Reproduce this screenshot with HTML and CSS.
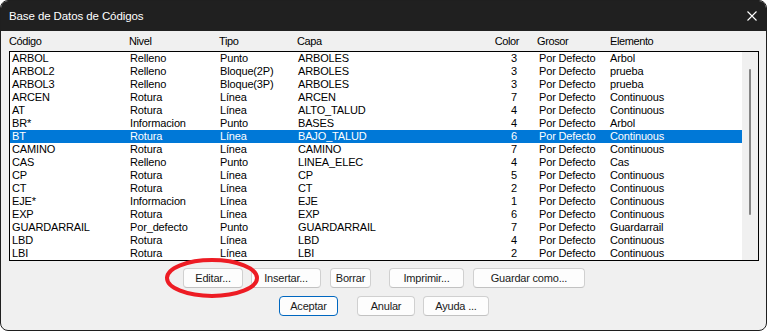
FILE: index.html
```html
<!DOCTYPE html>
<html lang="es">
<head>
<meta charset="utf-8">
<title>Base de Datos de Códigos</title>
<link rel="stylesheet" href="styles.css">
</head>
<body>
<div class="window">
  <div class="titlebar">
    <span class="title">Base de Datos de Códigos</span>
    <svg class="close" width="10" height="10" viewBox="0 0 10 10"><path d="M0.5 0.5 L9.5 9.5 M9.5 0.5 L0.5 9.5" stroke="#fff" stroke-width="1.1" fill="none"/></svg>
  </div>
  <div class="body">
    <div class="head">
      <span>Código</span><span>Nivel</span><span>Tipo</span><span>Capa</span><span class="r">Color</span><span>Grosor</span><span>Elemento</span>
    </div>
    <div class="listbox">
      <div class="rows">
        <div class="row"><span>ARBOL</span><span>Relleno</span><span>Punto</span><span>ARBOLES</span><span class="r">3</span><span>Por Defecto</span><span>Arbol</span></div>
        <div class="row"><span>ARBOL2</span><span>Relleno</span><span>Bloque(2P)</span><span>ARBOLES</span><span class="r">3</span><span>Por Defecto</span><span>prueba</span></div>
        <div class="row"><span>ARBOL3</span><span>Relleno</span><span>Bloque(3P)</span><span>ARBOLES</span><span class="r">3</span><span>Por Defecto</span><span>prueba</span></div>
        <div class="row"><span>ARCEN</span><span>Rotura</span><span>Línea</span><span>ARCEN</span><span class="r">7</span><span>Por Defecto</span><span>Continuous</span></div>
        <div class="row"><span>AT</span><span>Rotura</span><span>Línea</span><span>ALTO_TALUD</span><span class="r">4</span><span>Por Defecto</span><span>Continuous</span></div>
        <div class="row"><span>BR*</span><span>Informacion</span><span>Punto</span><span>BASES</span><span class="r">4</span><span>Por Defecto</span><span>Arbol</span></div>
        <div class="row sel"><span>BT</span><span>Rotura</span><span>Línea</span><span>BAJO_TALUD</span><span class="r">6</span><span>Por Defecto</span><span>Continuous</span></div>
        <div class="row"><span>CAMINO</span><span>Rotura</span><span>Línea</span><span>CAMINO</span><span class="r">7</span><span>Por Defecto</span><span>Continuous</span></div>
        <div class="row"><span>CAS</span><span>Relleno</span><span>Punto</span><span>LINEA_ELEC</span><span class="r">4</span><span>Por Defecto</span><span>Cas</span></div>
        <div class="row"><span>CP</span><span>Rotura</span><span>Línea</span><span>CP</span><span class="r">5</span><span>Por Defecto</span><span>Continuous</span></div>
        <div class="row"><span>CT</span><span>Rotura</span><span>Línea</span><span>CT</span><span class="r">2</span><span>Por Defecto</span><span>Continuous</span></div>
        <div class="row"><span>EJE*</span><span>Informacion</span><span>Línea</span><span>EJE</span><span class="r">1</span><span>Por Defecto</span><span>Continuous</span></div>
        <div class="row"><span>EXP</span><span>Rotura</span><span>Línea</span><span>EXP</span><span class="r">6</span><span>Por Defecto</span><span>Continuous</span></div>
        <div class="row"><span>GUARDARRAIL</span><span>Por_defecto</span><span>Punto</span><span>GUARDARRAIL</span><span class="r">7</span><span>Por Defecto</span><span>Guardarrail</span></div>
        <div class="row"><span>LBD</span><span>Rotura</span><span>Línea</span><span>LBD</span><span class="r">4</span><span>Por Defecto</span><span>Continuous</span></div>
        <div class="row"><span>LBI</span><span>Rotura</span><span>Línea</span><span>LBI</span><span class="r">2</span><span>Por Defecto</span><span>Continuous</span></div>
      </div>
      <div class="scroll"><div class="thumb"></div></div>
    </div>
    <div class="btnrow one">
      <button class="btn w-editar">Editar...</button>
      <button class="btn w-insertar">Insertar...</button>
      <button class="btn w-borrar">Borrar</button>
      <button class="btn w-imprimir">Imprimir...</button>
      <button class="btn w-guardar">Guardar como...</button>
    </div>
    <div class="btnrow two">
      <button class="btn default w-aceptar">Aceptar</button>
      <button class="btn w-anular">Anular</button>
      <button class="btn w-ayuda">Ayuda ...</button>
    </div>
  </div>
  <svg class="mark" width="98" height="42" viewBox="0 0 98 42"><ellipse cx="49" cy="21" rx="45" ry="18" fill="none" stroke="#ed1c24" stroke-width="4"/></svg>
</div>
</body>
</html>
```
FILE: styles.css
```css
* { box-sizing: border-box; }
html, body { margin: 0; padding: 0; background: #ffffff; }
body { width: 767px; height: 331px; overflow: hidden; }

.window {
  position: relative;
  width: 767px;
  height: 331px;
  border: 1px solid #1f1f1f;
  border-radius: 8px;
  overflow: hidden;
  background: #f0f0f0;
  font-family: "Liberation Sans", Arial, sans-serif;
  color: #000;
  display: flex;
  flex-direction: column;
}

.titlebar {
  height: 30px;
  flex: none;
  background: #202020;
  color: #ffffff;
  display: flex;
  align-items: center;
  justify-content: space-between;
  padding: 0 9px 0 8px;
  font-size: 11.5px;
}
.title { letter-spacing: -0.1px; }
.close { display: block; }

.body { flex: 1; display: flex; flex-direction: column; }

.head {
  height: 20px;
  display: grid;
  grid-template-columns: 120px 90px 78px 170px 52px 91px 1fr;
  padding-left: 8px;
  font-size: 11px;
  letter-spacing: -0.4px;
  line-height: 20px;
  white-space: nowrap;
}
.head span:nth-child(6) { padding-left: 18px; }
.head .r { text-align: right; }

.listbox {
  margin-left: 8px;
  width: 750px;
  height: 210px;
  border: 1px solid #000;
  background: #fff;
  display: flex;
}
.rows { flex: 1; }
.scroll {
  width: 16px;
  background: #f0f0f0;
  display: flex;
  justify-content: center;
  padding-top: 17px;
}
.thumb {
  width: 2px;
  height: 146px;
  border-radius: 1px;
  background: #858585;
}

.row {
  height: 13px;
  line-height: 13px;
  display: grid;
  grid-template-columns: 118px 90px 78px 170px 49px 93px 1fr;
  padding-left: 2px;
  font-size: 11px;
  letter-spacing: -0.15px;
  white-space: nowrap;
}
.row span:nth-child(6) { padding-left: 22px; }
.row .r { text-align: right; }
.row.sel { background: #0078d7; color: #fff; }

.btnrow { display: flex; height: 20px; }
.btnrow.one { margin-top: 7px; padding-left: 182px; gap: 8px; }
.btnrow.two { margin-top: 8px; padding-left: 278px; gap: 8px; }

.btn {
  height: 20px;
  padding: 0;
  font-family: "Liberation Sans", Arial, sans-serif;
  font-size: 11px;
  letter-spacing: -0.2px;
  color: #1a1a1a;
  background: #fdfdfd;
  border: 1px solid #d0d0d0;
  border-bottom-color: #c2c2c2;
  border-radius: 4px;
  line-height: 18px;
}
.btn.default { border: 1px solid #0067c0; }

.w-editar { width: 60px; }
.w-insertar { width: 70px; }
.w-borrar { width: 41px; margin-left: 1px; }
.w-imprimir { width: 75px; margin-left: 10px; }
.w-guardar { width: 112px; margin-left: 1px; }
.w-aceptar { width: 59px; }
.w-anular { width: 58px; margin-left: 11px; }
.w-ayuda { width: 66px; }

.mark {
  position: absolute;
  left: 162px;
  top: 256px;
}
```
